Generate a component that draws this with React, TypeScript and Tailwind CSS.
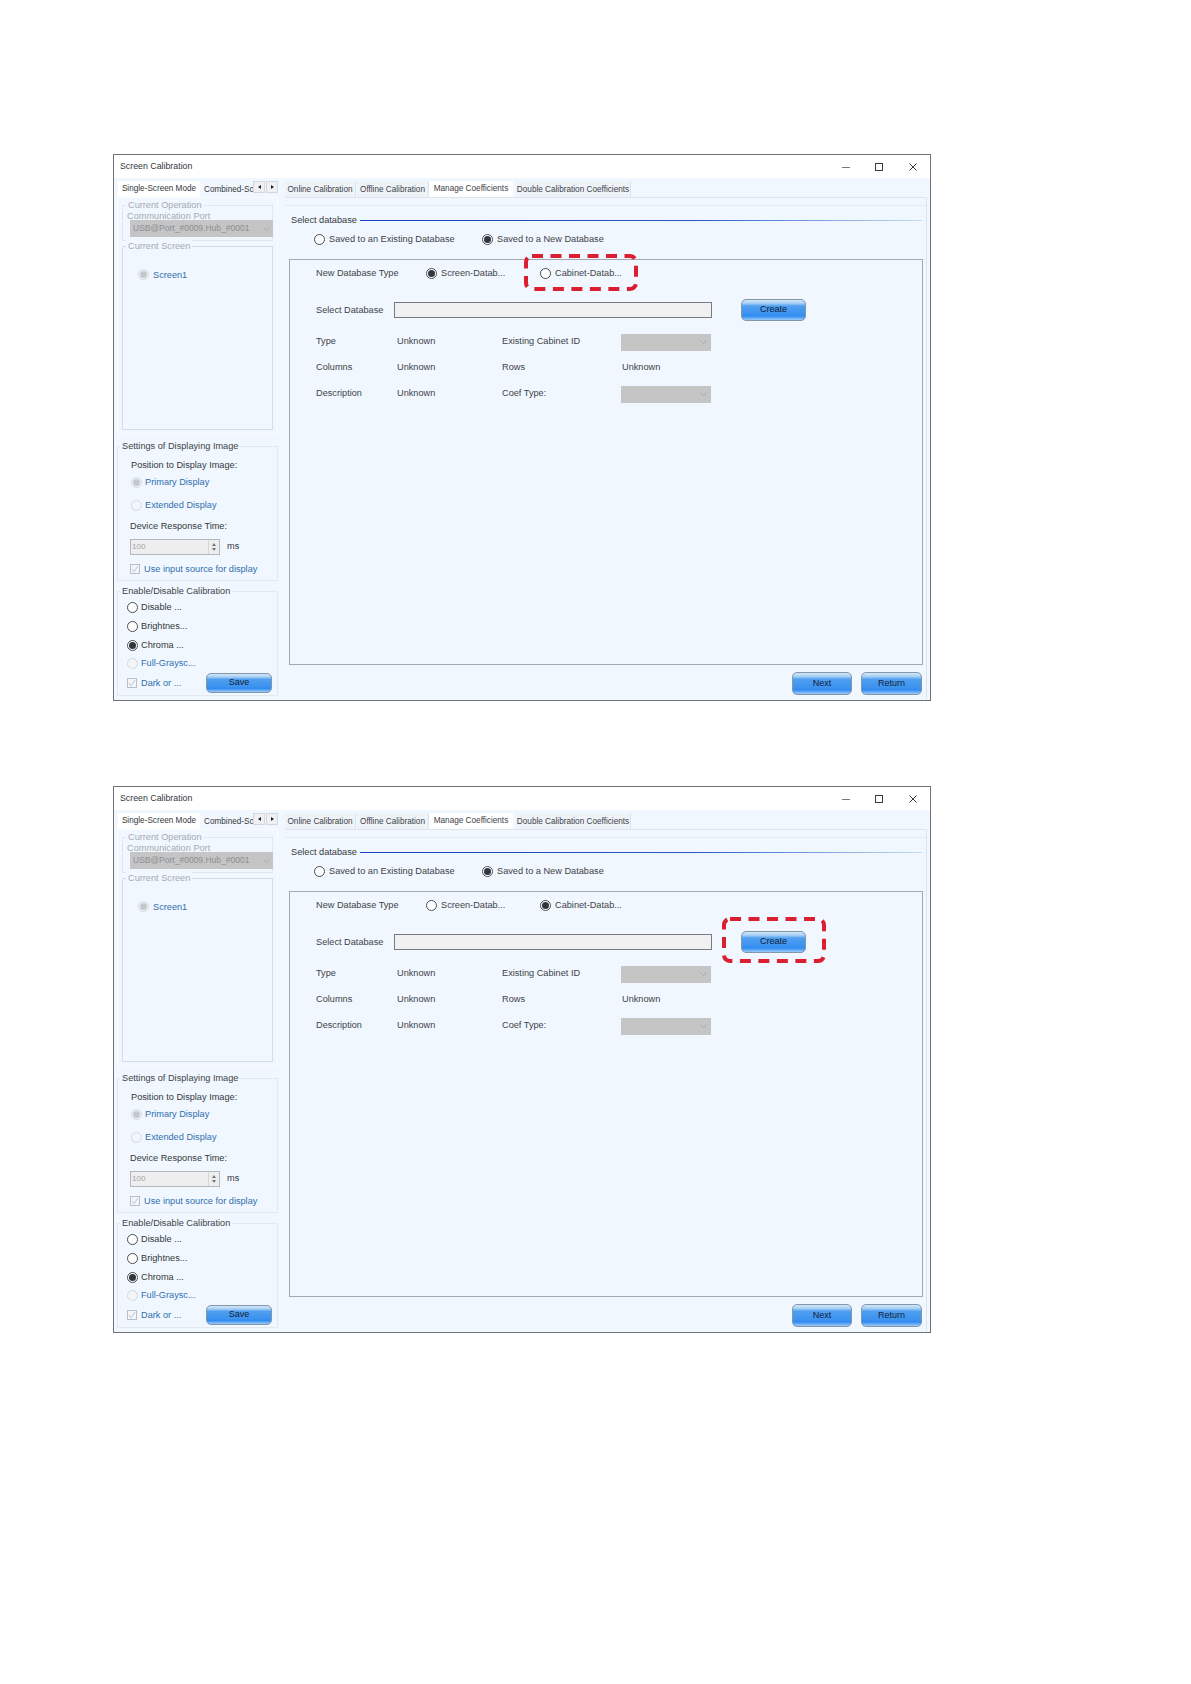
const btn = "rounded-[5px] border border-[#8497a8] text-[9px] text-[#10223a] flex items-center justify-center bg-[linear-gradient(#d3e6f7_0%,#a9d0f5_16%,#4f9ff0_30%,#3c92ef_70%,#2f8af0_80%,#9ccbf6_100%)]";

const Radio = ({ on, off }: { on?: boolean; off?: boolean }) => (
  <span className={`w-[11px] h-[11px] mb-[2px] shrink-0 rounded-full border flex items-center justify-center ${off ? "border-[#d2d8de] bg-[#f3f6f9]" : "border-[#4a4f55] bg-white"}`}>
    {on && <span className={`w-[7px] h-[7px] rounded-full ${off ? "bg-[#c4c9ce]" : "bg-[#33373b]"}`} />}
  </span>
);

const Check = () => (
  <span className="w-[10px] h-[10px] mb-[2px] shrink-0 border border-[#b9bfc5] bg-[#f3f6f9] flex items-center justify-center">
    <svg width="8" height="8" viewBox="0 0 8 8" fill="none" stroke="#b2b8be" strokeWidth="0.8"><path d="M1 4.2 3 6.6 7 1" /></svg>
  </span>
);

const Chevron = () => (
  <svg width="7" height="4" viewBox="0 0 7 4" fill="none" stroke="#a2a2a2" strokeWidth="0.8"><path d="M0.5 0.5 3.5 3.5 6.5 0.5" /></svg>
);

const Legend = ({ children, dim }: { children: string; dim?: boolean }) => (
  <span className={`absolute -top-[7px] bg-[#f1f7fe] px-[2px] leading-[13px] ${dim ? "left-[3px] text-[#a4abb2]" : "left-[2px] text-[#3d4247]"}`}>{children}</span>
);

const Highlight = ({ className }: { className: string }) => (
  <svg className={`absolute ${className}`} fill="none">
    <rect x="2" y="2" width="calc(100% - 4px)" height="calc(100% - 4px)" rx="6" stroke="#dc1f30" strokeWidth="4" strokeDasharray="11 7.5" />
  </svg>
);

const LeftColumn = () => (
  <div className="w-[161px] flex flex-col">
    <div className="h-[16px] flex items-end relative text-[8.2px] whitespace-nowrap">
      <div className="w-[82px] ml-[1px] h-[16px] bg-white text-[#33373b] flex items-center justify-center">Single-Screen Mode</div>
      <div className="ml-[4px] text-[#33373b] leading-[14px] w-[49px] overflow-hidden">Combined-Sc</div>
      <div className="absolute left-[136px] top-0 flex gap-[1px]">
        <span className="w-[12px] h-[12px] bg-[#eef0f2] border border-[#d5d8db] flex items-center justify-center"><span className="border-y-[2.5px] border-r-[3px] border-y-transparent border-r-[#222]" /></span>
        <span className="w-[12px] h-[12px] bg-[#eef0f2] border border-[#d5d8db] flex items-center justify-center"><span className="border-y-[2.5px] border-l-[3px] border-y-transparent border-l-[#222]" /></span>
      </div>
    </div>

    <div className="h-[237px] border border-[#f9fbfd] px-[4px] pt-[7px]">
      <div className="relative h-[36px] border border-[#e1e7ee] text-[#a4abb2]">
        <Legend dim>Current Operation</Legend>
        <div className="pl-[4px] pt-[5px] leading-[11px]">Communication Port</div>
        <div className="ml-[7px] -mr-[1px] mt-[-2px] h-[17px] bg-[#c5c5c5] text-[#8b8e91] flex items-center justify-between pl-[3px] pr-[3px] text-[8.5px]">
          <span>USB@Port_#0009.Hub_#0001</span>
          <Chevron />
        </div>
      </div>
      <div className="relative mt-[5px] h-[184px] border border-[#d4dce5]">
        <Legend dim>Current Screen</Legend>
        <div className="pl-[15px] pt-[21px] flex items-center gap-[4px] text-[#2f6fb0]">
          <Radio on off /> <span className="pt-[1px]">Screen1</span>
        </div>
      </div>
    </div>

    <div className="relative mt-[12px] h-[135px] border border-[#e3e9f0] pl-[13px] pt-[11px]">
      <Legend>Settings of Displaying Image</Legend>
      <div className="h-[14px] leading-[14px] text-[#33373b]">Position to Display Image:</div>
      <div className="mt-[3px] h-[14px] pt-[2px] flex items-center gap-[3px] text-[#2f6fb0]"><Radio on off />Primary Display</div>
      <div className="mt-[9px] h-[14px] pt-[2px] flex items-center gap-[3px] text-[#2f6fb0]"><Radio off />Extended Display</div>
      <div className="-ml-[1px] mt-[7px] h-[14px] leading-[14px] text-[#33373b]">Device Response Time:</div>
      <div className="-ml-[1px] mt-[6px] flex items-center gap-[7px] text-[#33373b]">
        <div className="w-[90px] h-[16px] border border-[#b5b9bd] bg-[#eeeeee] flex items-center justify-between pl-[1px] text-[#a2a5a8] text-[8px]">
          100
          <div className="w-[11px] h-full border-l border-[#d5d7d9] flex flex-col items-center justify-center gap-[2px]">
            <span className="border-x-[2.5px] border-b-[3px] border-x-transparent border-b-[#777]" />
            <span className="border-x-[2.5px] border-t-[3px] border-x-transparent border-t-[#777]" />
          </div>
        </div>
        ms
      </div>
      <div className="-ml-[1px] mt-[7px] h-[14px] pt-[2px] flex items-center gap-[4px] text-[#2f6fb0]"><Check />Use input source for display</div>
    </div>

    <div className="relative mt-[10px] h-[105px] border border-[#e3e9f0] pl-[9px] pt-[9px] text-[#33373b]">
      <Legend>Enable/Disable Calibration</Legend>
      <div className="h-[12px] pt-[2px] flex items-center gap-[3px]"><Radio />Disable ...</div>
      <div className="mt-[7px] h-[12px] pt-[2px] flex items-center gap-[3px]"><Radio />Brightnes...</div>
      <div className="mt-[7px] h-[12px] pt-[2px] flex items-center gap-[3px]"><Radio on />Chroma ...</div>
      <div className="mt-[6px] h-[12px] pt-[2px] flex items-center gap-[3px] text-[#2f6fb0]"><Radio off />Full-Graysc...</div>
      <div className="mt-[4px] flex items-center justify-between pr-[5px] text-[#2f6fb0]">
        <span className="flex items-center gap-[4px] pt-[2px]"><Check />Dark or ...</span>
        <div className={`${btn} w-[66px] h-[20px] text-[#10223a]`}>Save</div>
      </div>
    </div>
  </div>
);

const Tab = ({ label, active, className }: { label: string; active?: boolean; className: string }) => (
  <div className={`h-[16px] flex items-center justify-center whitespace-nowrap text-[8.2px] ${active ? "bg-white" : "bg-[#eef3f8] border-r border-[#dde3ea] pt-[2px]"} ${className}`}>{label}</div>
);

const RightColumn = ({ cabinet }: { cabinet?: boolean }) => (
  <div className="w-[642px] flex flex-col text-[#3d4247]">
    <div className="h-[16px] flex">
      <Tab label="Online Calibration" className="w-[71px]" />
      <Tab label="Offline Calibration" className="w-[72px] ml-[1px]" />
      <Tab label="Manage Coefficients" active className="w-[84px]" />
      <Tab label="Double Calibration Coefficients" className="w-[115px] ml-[3px]" />
    </div>
    <div className="h-[503px] border-t border-r border-[#dde4ec] pt-[7px]">
      <div className="border-t border-[#e4eaf1] pr-[4px] pl-[6px] pt-[7px]">
        <div className="h-[14px] pt-[2px] flex items-center gap-[3px] text-[#33373b]">
          Select database
          <div className="flex-1 h-[1px] mb-[2px] bg-[linear-gradient(90deg,#1a3fc4_0%,#2b57c9_60%,#bfe0f2_100%)]" />
        </div>
        <div className="mt-[5px] h-[14px] pt-[2px] flex items-center pl-[23px]">
          <Radio /><span className="ml-[4px] w-[153px]">Saved to an Existing Database</span>
          <Radio on /><span className="ml-[4px]">Saved to a New Database</span>
        </div>
      </div>
      <div className="ml-[4px] mt-[13px] w-[634px] h-[406px] border border-[#a3a9b0] pl-[26px] pt-[3px]">
        <div className="h-[20px] pt-[2px] flex items-center">
          <span className="w-[110px]">New Database Type</span>
          <Radio on={!cabinet} /><span className="ml-[4px] w-[99px]">Screen-Datab...</span>
          <Radio on={cabinet} /><span className="ml-[4px]">Cabinet-Datab...</span>
        </div>
        <div className="mt-[16px] h-[22px] flex items-center">
          <span className="w-[78px] pt-[2px]">Select Database</span>
          <div className="w-[318px] h-[16px] bg-[#f0f0f0] border border-[#777b80]" />
          <div className={`${btn} ml-[29px] w-[65px] h-[22px]`}>Create</div>
        </div>
        <div className="mt-[12px] h-[18px] grid grid-cols-[81px_105px_119px_90px] items-center">
          <span>Type</span><span>Unknown</span><span>Existing Cabinet ID</span>
          <div className="h-[17px] bg-[#c5c5c5] flex items-center justify-end pr-[4px]"><Chevron /></div>
        </div>
        <div className="mt-[8px] h-[18px] grid grid-cols-[81px_105px_119px_90px] items-center">
          <span>Columns</span><span>Unknown</span><span>Rows</span><span className="pl-[1px]">Unknown</span>
        </div>
        <div className="mt-[8px] h-[18px] grid grid-cols-[81px_105px_119px_90px] items-center">
          <span>Description</span><span>Unknown</span><span>Coef Type:</span>
          <div className="h-[17px] bg-[#c5c5c5] flex items-center justify-end pr-[4px]"><Chevron /></div>
        </div>
      </div>
      <div className="mt-[7px] flex justify-end gap-[9px] pr-[4px]">
        <div className={`${btn} w-[60px] h-[23px]`}>Next</div>
        <div className={`${btn} w-[61px] h-[23px]`}>Return</div>
      </div>
    </div>
  </div>
);

const CalibrationWindow = ({ cabinet }: { cabinet?: boolean }) => (
  <div className="relative w-[818px] h-[547px] border border-[#6f7276] bg-[#f1f7fe] text-[9.2px]">
    <div className="h-[23px] bg-white flex items-center pl-[6px] text-[#33373b] text-[8.8px]">
      <span className="flex-1">Screen Calibration</span>
      <svg width="88" height="12" viewBox="0 0 88 12" fill="none" stroke="#3a3a3a" strokeWidth="1" className="mr-[1px]">
        <path d="M1 6.5h8" stroke="#777" />
        <rect x="34.5" y="2.5" width="7" height="7" />
        <path d="M68.5 2.5l7 7M75.5 2.5l-7 7" />
      </svg>
    </div>
    <div className="flex gap-[7px] pl-[3px] pt-[3px]">
      <LeftColumn />
      <RightColumn cabinet={cabinet} />
    </div>
    {cabinet
      ? <Highlight className="left-[608px] top-[130px] w-[104px] h-[46px]" />
      : <Highlight className="left-[410px] top-[99px] w-[114px] h-[37px]" />}
  </div>
);

const App = () => (
  <div className="w-[1191px] h-[1684px] bg-white pt-[154px] pl-[113px] flex flex-col gap-[85px] font-['Liberation_Sans',Arial,sans-serif]">
    <CalibrationWindow />
    <CalibrationWindow cabinet />
  </div>
);

export default App;
